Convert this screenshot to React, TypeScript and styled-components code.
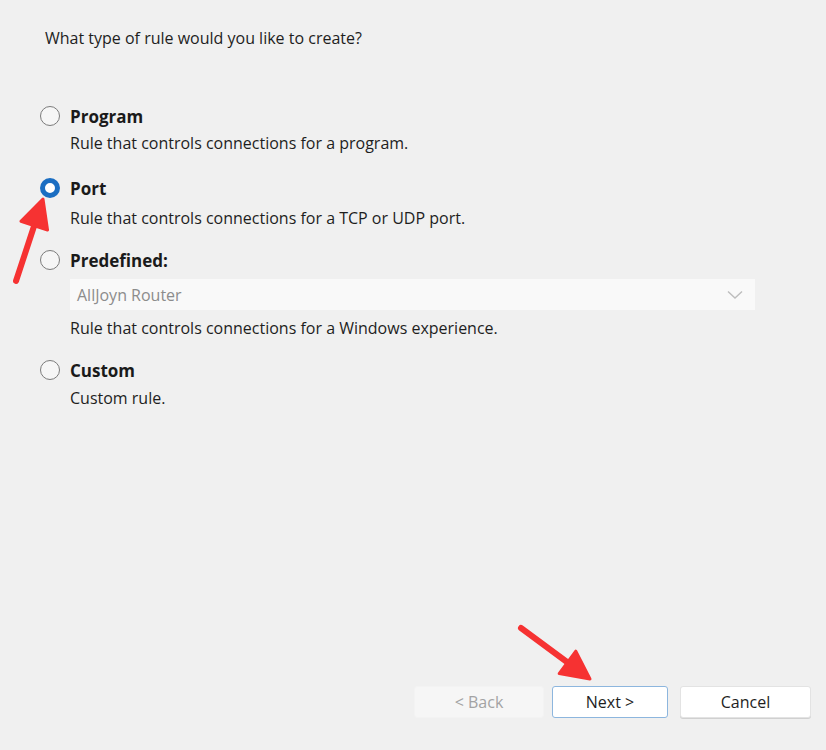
import React from "react";
import styled, { createGlobalStyle } from "styled-components";

const FONT = `"Open Sans", "Liberation Sans", Arial, sans-serif`;

const Global = createGlobalStyle`
  html, body { margin: 0; padding: 0; background: #f0f0f0; }
  body { font-family: ${FONT}; }
`;

const Page = styled.div`
  position: relative;
  width: 826px;
  height: 750px;
  background: #f0f0f0;
  display: flex;
  flex-direction: column;
  box-sizing: border-box;
  overflow: hidden;
`;

const Header = styled.div`
  margin: 28px 0 0 45px;
  font-size: 16px;
  line-height: 20px;
  color: #1e1e1e;
`;

const Options = styled.div`
  margin: 56px 0 0 40px;
  display: flex;
  flex-direction: column;
`;

const Option = styled.div<{ $gap?: number }>`
  display: flex;
  flex-direction: column;
  margin-top: ${(p) => p.$gap ?? 0}px;
`;

const Row = styled.label`
  display: flex;
  align-items: center;
  height: 24px;
  gap: 10px;
`;

const Radio = styled.span<{ $checked?: boolean }>`
  width: 20px;
  height: 20px;
  box-sizing: border-box;
  border-radius: 50%;
  flex: none;
  background: ${(p) => (p.$checked ? "#ffffff" : "#f6f6f6")};
  border: ${(p) => (p.$checked ? "5px solid #1b6ec2" : "1.5px solid #7b7b7b")};
`;

const Label = styled.span`
  font-size: 17px;
  font-weight: bold;
  color: #1a1a1a;
`;

const Desc = styled.div<{ $top?: number }>`
  margin: ${(p) => p.$top ?? 3}px 0 0 30px;
  font-size: 16px;
  line-height: 24px;
  color: #1e1e1e;
`;

const Select = styled.div`
  margin: 7px 0 0 30px;
  width: 685px;
  height: 31px;
  box-sizing: border-box;
  background: #f9f9f9;
  display: flex;
  align-items: center;
  justify-content: space-between;
  padding: 0 12px 0 7px;
  font-size: 16px;
  color: #8c8c8c;
`;

const ButtonBar = styled.div`
  margin-top: auto;
  padding: 0 15px 32px 0;
  display: flex;
  justify-content: flex-end;
  align-items: center;
`;

const Button = styled.button<{ $w: number; $ml: number; $variant?: "disabled" | "default" | "normal" }>`
  width: ${(p) => p.$w}px;
  height: 32px;
  margin-left: ${(p) => p.$ml}px;
  box-sizing: border-box;
  font-family: ${FONT};
  font-size: 16px;
  border-radius: 3px;
  padding: 0;
  background: ${(p) => (p.$variant === "disabled" ? "#f6f6f6" : "#ffffff")};
  color: ${(p) => (p.$variant === "disabled" ? "#a3a3a3" : "#1e1e1e")};
  border: 1px solid
    ${(p) =>
      p.$variant === "default" ? "#8db6de" : p.$variant === "disabled" ? "#f3f3f3" : "#e3e3e3"};
  box-shadow: ${(p) => (p.$variant === "normal" ? "0 1px 0 #d0d0d0" : "none")};
`;

const Annotation = styled.svg`
  position: absolute;
  left: 0;
  top: 0;
  pointer-events: none;
`;

function Arrow({ x1, y1, x2, y2 }: { x1: number; y1: number; x2: number; y2: number }) {
  const dx = x2 - x1;
  const dy = y2 - y1;
  const len = Math.hypot(dx, dy);
  const ux = dx / len;
  const uy = dy / len;
  const head = 28;
  const half = 14;
  const bx = x2 - ux * head;
  const by = y2 - uy * head;
  const px = -uy;
  const py = ux;
  return (
    <g>
      <line x1={x1} y1={y1} x2={bx + ux * 4} y2={by + uy * 4} stroke="#f63232" strokeWidth={6} strokeLinecap="round" />
      <polygon
        points={`${x2},${y2} ${bx + px * half},${by + py * half} ${bx - px * half},${by - py * half}`}
        fill="#f63232"
        stroke="#f63232"
        strokeWidth={3}
        strokeLinejoin="round"
      />
    </g>
  );
}

export default function App() {
  return (
    <>
      <Global />
      <Page>
        <Header>What type of rule would you like to create?</Header>
        <Options>
          <Option>
            <Row>
              <Radio />
              <Label>Program</Label>
            </Row>
            <Desc>Rule that controls connections for a program.</Desc>
          </Option>
          <Option $gap={21}>
            <Row>
              <Radio $checked />
              <Label>Port</Label>
            </Row>
            <Desc $top={6}>Rule that controls connections for a TCP or UDP port.</Desc>
          </Option>
          <Option $gap={18}>
            <Row>
              <Radio />
              <Label>Predefined:</Label>
            </Row>
            <Select>
              <span>AllJoyn Router</span>
              <svg width="16" height="10" viewBox="0 0 16 10">
                <path d="M1 1.5 L8 8 L15 1.5" fill="none" stroke="#bdbdbd" strokeWidth="1.4" />
              </svg>
            </Select>
            <Desc $top={6}>Rule that controls connections for a Windows experience.</Desc>
          </Option>
          <Option $gap={18}>
            <Row>
              <Radio />
              <Label>Custom</Label>
            </Row>
            <Desc $top={4}>Custom rule.</Desc>
          </Option>
        </Options>
        <ButtonBar>
          <Button $w={130} $ml={0} $variant="disabled">&lt; Back</Button>
          <Button $w={116} $ml={8} $variant="default">Next &gt;</Button>
          <Button $w={131} $ml={12} $variant="normal">Cancel</Button>
        </ButtonBar>
        <Annotation width="826" height="750" viewBox="0 0 826 750">
          <Arrow x1={16} y1={281} x2={43} y2={199} />
          <Arrow x1={521} y1={628} x2={590} y2={679} />
        </Annotation>
      </Page>
    </>
  );
}
